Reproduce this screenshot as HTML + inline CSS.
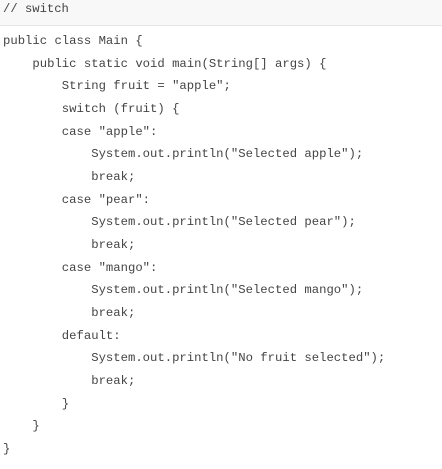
<!DOCTYPE html>
<html><head><style>
html,body{margin:0;padding:0;background:#fff;width:442px;height:469px;overflow:hidden}
.h{height:26px;background:#f8f8f8;border-bottom:1px solid #e6e6e6;font:12.2px "Liberation Mono",monospace;color:#444;line-height:19px;padding-left:3px;box-sizing:border-box}
pre{margin:0;padding:4px 0 0 3px;font:12.25px/22.67px "Liberation Mono",monospace;color:#444}
</style></head><body>
<div class="h">// switch</div>
<pre>public class Main {
    public static void main(String[] args) {
        String fruit = "apple";
        switch (fruit) {
        case "apple":
            System.out.println("Selected apple");
            break;
        case "pear":
            System.out.println("Selected pear");
            break;
        case "mango":
            System.out.println("Selected mango");
            break;
        default:
            System.out.println("No fruit selected");
            break;
        }
    }
}</pre>
</body></html>
